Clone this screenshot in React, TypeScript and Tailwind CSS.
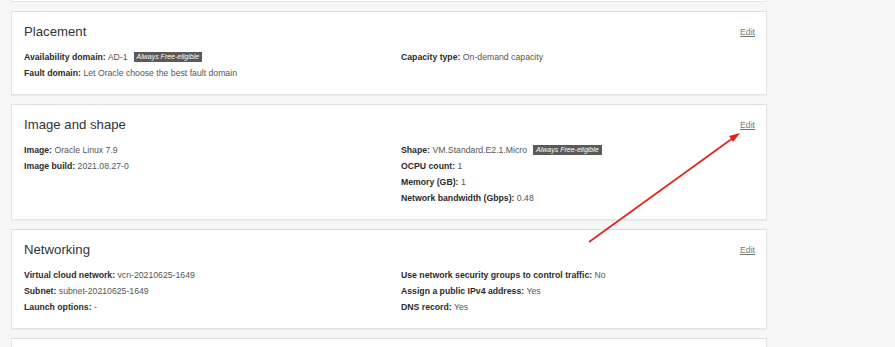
import React from "react";

type Item = { label: string; value: string; badge?: boolean };

function Badge() {
  return (
    <span className="ml-[6px] inline-block bg-[#5a5a5a] px-[3px] text-[7px] italic leading-[10px] text-white align-[1px]">
      Always Free-eligible
    </span>
  );
}

function Row({ item }: { item: Item }) {
  return (
    <div className="h-[16px] whitespace-nowrap leading-[16px]">
      <span className="font-bold text-[#2b2b2b]">{item.label}:</span>{" "}
      <span className="text-[#555]">{item.value}</span>
      {item.badge && <Badge />}
    </div>
  );
}

function Card({ title, left, right }: { title: string; left: Item[]; right: Item[] }) {
  return (
    <div className="border border-[#e4e4e4] border-t-[#dedede] bg-white pb-[13px] pl-[12px] pr-[11px] pt-[12px] shadow-[0_1px_1px_rgba(0,0,0,0.04)]">
      <div className="flex h-[16px] items-center justify-between">
        <div className="text-[13.2px] leading-[16px] text-[#333]">{title}</div>
        <a className="text-[8.7px] leading-[16px] text-[#777] underline">Edit</a>
      </div>
      <div className="mt-[9px] grid grid-cols-[377px_1fr] text-[8.7px]">
        <div>
          {left.map((it) => (
            <Row key={it.label} item={it} />
          ))}
        </div>
        <div>
          {right.map((it) => (
            <Row key={it.label} item={it} />
          ))}
        </div>
      </div>
    </div>
  );
}

export default function App() {
  return (
    <div
      className="relative h-[347px] w-[895px] overflow-hidden bg-[#f6f6f6]"
      style={{ fontFamily: '"Liberation Sans", Arial, sans-serif' }}
    >
      <div className="flex w-[767px] flex-col gap-[9px] pl-[11px]">
        <div className="-mt-[20px] h-[22px] border border-[#e4e4e4] bg-white" />
        <Card
          title="Placement"
          left={[
            { label: "Availability domain", value: "AD-1", badge: true },
            { label: "Fault domain", value: "Let Oracle choose the best fault domain" },
          ]}
          right={[{ label: "Capacity type", value: "On-demand capacity" }]}
        />
        <Card
          title="Image and shape"
          left={[
            { label: "Image", value: "Oracle Linux 7.9" },
            { label: "Image build", value: "2021.08.27-0" },
          ]}
          right={[
            { label: "Shape", value: "VM.Standard.E2.1.Micro", badge: true },
            { label: "OCPU count", value: "1" },
            { label: "Memory (GB)", value: "1" },
            { label: "Network bandwidth (Gbps)", value: "0.48" },
          ]}
        />
        <Card
          title="Networking"
          left={[
            { label: "Virtual cloud network", value: "vcn-20210625-1649" },
            { label: "Subnet", value: "subnet-20210625-1649" },
            { label: "Launch options", value: "-" },
          ]}
          right={[
            { label: "Use network security groups to control traffic", value: "No" },
            { label: "Assign a public IPv4 address", value: "Yes" },
            { label: "DNS record", value: "Yes" },
          ]}
        />
        <div className="h-[40px] border border-[#e4e4e4] border-t-[#dedede] bg-white" />
      </div>
      <svg className="pointer-events-none absolute left-0 top-0" width="895" height="347">
        <line x1="589" y1="242" x2="733" y2="138" stroke="#e3201b" strokeWidth="1.6" />
        <polygon points="740,133 729,136 733,142" fill="#e3201b" />
      </svg>
    </div>
  );
}
